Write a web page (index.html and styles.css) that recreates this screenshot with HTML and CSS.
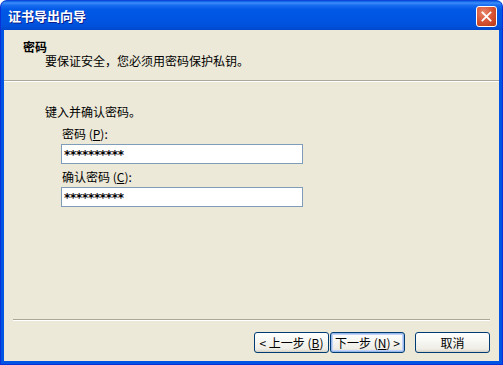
FILE: index.html
```html
<!DOCTYPE html>
<html lang="zh-CN">
<head>
<meta charset="utf-8">
<title>证书导出向导</title>
<link rel="stylesheet" href="styles.css">
</head>
<body>
<div class="window">
  <div class="titlebar">
    <span class="title">证书导出向导</span>
    <span class="close" aria-label="关闭">
      <svg width="21" height="21" viewBox="0 0 21 21">
        <path d="M6 6 L15 15 M15 6 L6 15" stroke="#fff" stroke-width="2" stroke-linecap="square"/>
      </svg>
    </span>
  </div>
  <div class="body">
    <div class="header">
      <div class="h-title">密码</div>
      <div class="h-sub">要保证安全，您必须用密码保护私钥。</div>
    </div>
    <div class="sep"></div>
    <div class="content">
      <div class="intro">键入并确认密码。</div>
      <div class="field">
        <label class="lbl">密码 (<u>P</u>):</label>
        <div class="input">**********</div>
      </div>
      <div class="field">
        <label class="lbl">确认密码 (<u>C</u>):</label>
        <div class="input">**********</div>
      </div>
    </div>
    <div class="footer">
      <div class="sep foot-sep"></div>
      <div class="buttons">
        <button class="btn">&lt; 上一步 (<u>B</u>)</button>
        <button class="btn default">下一步 (<u>N</u>) &gt;</button>
        <button class="btn cancel">取消</button>
      </div>
    </div>
  </div>
</div>
</body>
</html>
```

FILE: styles.css
```css
* { box-sizing: border-box; }
html, body { margin: 0; padding: 0; background: #ffffff; }
body {
  font-family: "Noto Sans CJK SC", "DejaVu Sans", sans-serif;
  font-size: 12px;
  color: #000;
}
.window {
  width: 503px;
  height: 365px;
  display: flex;
  flex-direction: column;
  background: #0054E3;
  border-radius: 7px 7px 0 0;
  overflow: hidden;
  border: 1px solid #0831D9;
  border-top-color: #0A47D8;
}
.titlebar {
  height: 29px;
  flex: none;
  display: flex;
  align-items: center;
  justify-content: space-between;
  padding: 0 5px 0 7px;
  background: linear-gradient(to bottom, #0A5CE8 0%, #3D8EF8 7%, #1A6DF0 14%, #0058E6 30%, #0055E3 60%, #0052DD 85%, #0048CC 100%);
}
.title {
  color: #fff;
  font-weight: bold;
  font-size: 13px;
  line-height: 16px;
  text-shadow: 1px 1px 0 #0A1E8C;
  padding-top: 1px;
}
.close {
  width: 21px;
  height: 21px;
  border: 1px solid #fff;
  border-radius: 3px;
  background: radial-gradient(circle at 35% 30%, #E8866A 0%, #D9583A 45%, #C6421F 80%, #B33A1E 100%);
  display: flex;
  margin-top: 1px;
}
.close svg { width: 19px; height: 19px; }
.body {
  flex: 1;
  margin: 0 3px 3px;
  background: #ECE9D8;
  display: flex;
  flex-direction: column;
}
.header {
  height: 50px;
  padding: 10px 0 0 19px;
  line-height: 14px;
}
.h-title { font-weight: bold; }
.h-sub { padding-left: 22px; }
.sep {
  height: 2px;
  border-top: 1px solid #ACA899;
  border-bottom: 1px solid #fff;
}
.content {
  padding: 23px 0 0 41px;
  line-height: 14px;
}
.intro { margin-bottom: 8px; }
.field {
  padding-left: 17px;
  display: flex;
  flex-direction: column;
  margin-bottom: 6px;
}
.lbl { margin-bottom: 3px; }
.input {
  margin-left: -1px;
  width: 242px;
  height: 20px;
  border: 1px solid #7F9DB9;
  background: #fff;
  font-family: "DejaVu Sans", sans-serif;
  font-size: 12px;
  font-weight: bold;
  letter-spacing: -0.3px;
  line-height: 20px;
  padding-left: 2px;
}
.footer {
  margin-top: auto;
  padding-bottom: 8px;
}
.foot-sep { margin: 0 9px; }
.buttons {
  display: flex;
  justify-content: flex-end;
  padding: 11px 9px 0 0;
}
.btn {
  width: 75px;
  height: 21px;
  padding: 0;
  font-family: inherit;
  font-size: 12px;
  line-height: 14px;
  color: #000;
  border: 1px solid #003C74;
  border-radius: 3px;
  background: linear-gradient(to bottom, #FFFFFF 0%, #F7F7F4 40%, #EEEDE5 85%, #D6D0C5 100%);
}
.btn + .btn { margin-left: 1px; }
.btn.default {
  box-shadow: inset 0 0 0 1px #98B8EA, inset 0 0 0 2px #C1D3F8;
}
.btn.cancel { margin-left: 10px; }
```
